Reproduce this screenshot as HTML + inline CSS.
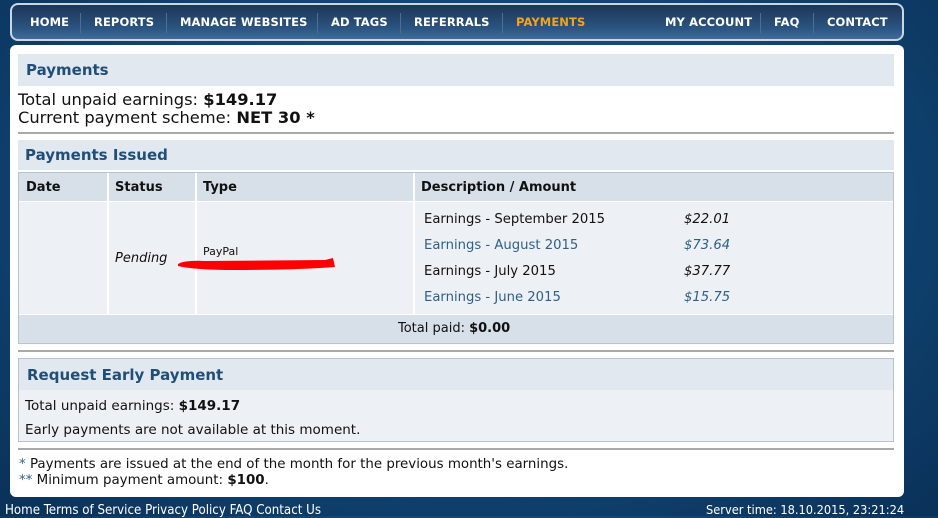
<!DOCTYPE html>
<html><head><style>
*{margin:0;padding:0;box-sizing:border-box}
body{width:938px;height:516px;overflow:hidden;position:relative;font-family:"DejaVu Sans",Verdana,sans-serif;background:radial-gradient(ellipse at 50% 40%,#1d5a8c 0%,#114777 50%,#0a3158 100%);}
.a{position:absolute}
#nav{left:10px;top:3px;width:894px;height:38px;border:2px solid #c9d6e3;border-radius:8px;background:linear-gradient(#1c3656,#2c5582 70%,#3f6c9b);}
.n{position:absolute;top:10px;font-size:11.5px;font-weight:bold;color:#fff;letter-spacing:.1px}
.sep{position:absolute;top:8px;width:1px;height:20px;background:#4d6f93}
#pan{left:10px;top:45px;width:894px;height:452px;background:#fff;border-radius:6px}
.hd{background:#e1e8f0;color:#1f4e79;font-weight:bold;font-size:15px}
.t{font-size:13px;color:#111}
.bl{color:#2e5f86}
.hr{height:2px;background:#a9a9a9;left:18px;width:876px}
.ft{font-family:'DejaVu Sans Condensed','Liberation Sans Narrow',sans-serif;color:#fff}
</style></head><body>
<div id="nav" class="a">
<span class="n" style="left:18px">HOME</span><div class="sep" style="left:68px"></div>
<span class="n" style="left:82px">REPORTS</span><div class="sep" style="left:154px"></div>
<span class="n" style="left:168px">MANAGE WEBSITES</span><div class="sep" style="left:305px"></div>
<span class="n" style="left:319px">AD TAGS</span><div class="sep" style="left:388px"></div>
<span class="n" style="left:402px">REFERRALS</span><div class="sep" style="left:490px"></div>
<span class="n" style="left:504px;color:#f7a21b">PAYMENTS</span>
<span class="n" style="left:653px">MY ACCOUNT</span><div class="sep" style="left:748px"></div>
<span class="n" style="left:762px">FAQ</span><div class="sep" style="left:801px"></div>
<span class="n" style="left:815px">CONTACT</span>
</div>
<div id="pan" class="a"></div>
<div class="a hd" style="left:18px;top:54px;width:876px;height:32px;padding:7px 8px">Payments</div>
<div class="a t" style="left:18px;top:91px;font-size:16.3px;line-height:18px">Total unpaid earnings: <b>$149.17</b><br>Current payment scheme: <b>NET 30 *</b></div>
<div class="a hr" style="top:132px"></div>
<div class="a hd" style="left:18px;top:140px;width:876px;height:30px;padding:6px 7px">Payments Issued</div>
<div class="a" style="left:18px;top:172px;width:876px;height:172px;border:1px solid #b7c3cf;background:#edf1f5"></div>
<div class="a" style="left:19px;top:173px;width:874px;height:28px;background:#d7dfe9"></div>
<div class="a" style="left:19px;top:315px;width:874px;height:28px;background:#d7dfe9"></div>
<div class="a" style="left:107px;top:173px;width:2px;height:142px;background:#fff"></div>
<div class="a" style="left:195px;top:173px;width:2px;height:142px;background:#fff"></div>
<div class="a" style="left:413px;top:173px;width:2px;height:142px;background:#fff"></div>
<div class="a" style="left:19px;top:201px;width:874px;height:1px;background:#fff"></div>
<div class="a" style="left:19px;top:314px;width:874px;height:1px;background:#fff"></div>
<div class="a t" style="left:26px;top:180px;font-weight:bold">Date</div>
<div class="a t" style="left:115px;top:180px;font-weight:bold">Status</div>
<div class="a t" style="left:203px;top:180px;font-weight:bold">Type</div>
<div class="a t" style="left:421px;top:180px;font-weight:bold">Description / Amount</div>
<div class="a t" style="left:115px;top:251px;font-style:italic">Pending</div>
<div class="a" style="left:203px;top:245px;font-size:11px;color:#111">PayPal</div>
<svg class="a" style="left:175px;top:255px" width="162" height="20"><path d="M3 9 Q10 5 30 6 L150 5 L158 3 L160 12 Q120 15 60 15 Q20 15 3 11Z" fill="#f00"/></svg>
<div class="a t" style="left:424px;top:207px;line-height:26px;font-size:13.2px">Earnings - September 2015<br><span class="bl">Earnings - August 2015</span><br>Earnings - July 2015<br><span class="bl">Earnings - June 2015</span></div>
<div class="a t" style="left:684px;top:207px;line-height:26px;font-style:italic;font-size:13.2px">$22.01<br><span class="bl">$73.64</span><br>$37.77<br><span class="bl">$15.75</span></div>
<div class="a t" style="left:398px;top:321px">Total paid: <b>$0.00</b></div>
<div class="a hr" style="top:350px"></div>
<div class="a" style="left:18px;top:358px;width:876px;height:84px;border:1px solid #b7c3cf;background:#edf1f5"></div>
<div class="a hd" style="left:19px;top:359px;width:874px;height:31px;padding:7px 8px">Request Early Payment</div>
<div class="a t" style="left:25px;top:398px;font-size:13.5px">Total unpaid earnings: <b>$149.17</b></div>
<div class="a t" style="left:25px;top:422px;font-size:13.5px">Early payments are not available at this moment.</div>
<div class="a hr" style="top:448px"></div>
<div class="a t" style="left:19px;top:457px;line-height:16px;font-size:13.4px"><span class="bl">*</span> Payments are issued at the end of the month for the previous month's earnings.<br><span class="bl">**</span> Minimum payment amount: <b>$100</b>.</div>
<div class="a ft" style="left:5px;top:503px;font-size:13.2px">Home Terms of Service Privacy Policy FAQ Contact Us</div>
<div class="a ft" style="left:706px;top:502px;font-size:12.7px">Server time: 18.10.2015, 23:21:24</div>
</body></html>
